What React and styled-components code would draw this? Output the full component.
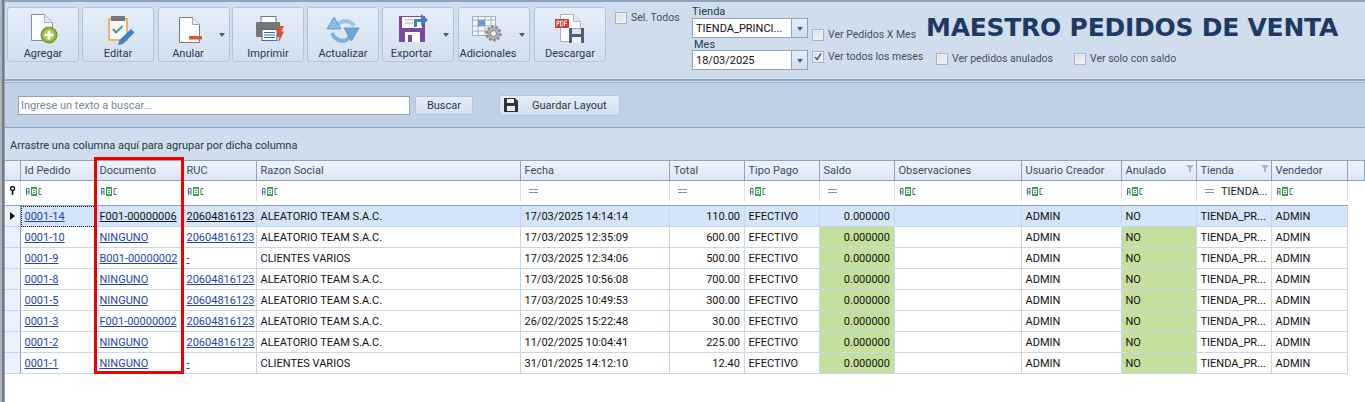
import React from 'react'
import styled, { createGlobalStyle } from 'styled-components'

const Global = createGlobalStyle`
  html, body { margin: 0; padding: 0; background: #fff; }
  body { font-family: Roboto, "Liberation Sans", Arial, sans-serif; font-size: 11px; color: #1b1b1b; overflow: hidden; }
`

const Frame = styled.div`
  width: 1365px;
  height: 402px;
  box-sizing: border-box;
  border-top: 2px solid #7d7d7d;
  border-left: 5px solid #8b97a6;
  border-image: linear-gradient(to right, #aeb4bb 2px, #757b83 2px, #757b83 4px, #8ea3c0 4px) 5;
  border-top-style: solid;
  background: #fff;
  overflow: hidden;
`

const Toolbar = styled.div`
  height: 79px;
  box-sizing: border-box;
  display: flex;
  align-items: flex-start;
  padding: 5px 0 0 2px;
  background: #d0dded;
  border-bottom: 2px solid #8ea3c0;
`

const Tool = styled.div`
  position: relative;
  width: 72px;
  height: 55px;
  flex: none;
  margin-left: ${p => p.$gap || 0}px;
  box-sizing: border-box;
  border: 1px solid #b3c3d9;
  border-radius: 3px;
  background: linear-gradient(#e5eefa, #d2dfef);
  display: flex;
  flex-direction: column;
  align-items: center;
  justify-content: space-between;
  padding: 6px 0 0;
  color: #26384f;
`

const ToolIcon = styled.svg`
  width: 32px;
  height: 32px;
  overflow: visible;
  margin-left: ${p => p.$shift || 0}px;
`

const ToolLabel = styled.span`
  line-height: 14px;
  margin-left: ${p => p.$shift || 0}px;
`

const Caret = styled.i`
  position: absolute;
  right: 4px;
  top: 25px;
  width: 0;
  height: 0;
  border: 3px solid transparent;
  border-top: 4px solid #4b5a70;
`

const SelCol = styled.div`
  margin-left: 9px;
  padding-top: 4px;
  width: 77px;
  flex: none;
`

const StoreCol = styled.div`
  width: 116px;
  flex: none;
  display: flex;
  flex-direction: column;
  color: #26384f;
`

const SmallLabel = styled.span`
  height: ${p => p.$h}px;
  line-height: ${p => p.$lh}px;
  padding-left: ${p => p.$pad || 0}px;
`

const Combo = styled.div`
  height: 20px;
  box-sizing: border-box;
  border: 1px solid #8ea3c0;
  background: #fff;
  display: flex;
  align-items: center;
  color: #111;
  padding-left: 3px;
`

const ComboText = styled.span`
  flex: 1;
`

const ComboBtn = styled.span`
  width: 16px;
  height: 18px;
  box-sizing: border-box;
  border-left: 1px solid #8ea3c0;
  background: linear-gradient(#e6eefa, #d0ddee);
  display: flex;
  align-items: center;
  justify-content: center;
  &::after {
    content: '';
    border: 3px solid transparent;
    border-top: 4px solid #4b5a70;
    margin-top: 4px;
  }
`

const CheckCol = styled.div`
  margin-left: 4px;
  width: 114px;
  flex: none;
  padding-top: 21px;
  display: flex;
  flex-direction: column;
  gap: 9px;
`

const RightCol = styled.div`
  flex: 1;
  padding-top: 5px;
`

const Title = styled.div`
  font-family: "DejaVu Sans", Verdana, sans-serif;
  font-weight: 700;
  font-size: 25px;
  letter-spacing: -0.25px;
  line-height: 32px;
  color: #1e3a63;
  white-space: nowrap;
`

const OptionRow = styled.div`
  display: flex;
  padding: 8px 0 0 10px;
  gap: 21px;
`

const CheckWrap = styled.label`
  display: flex;
  align-items: center;
  gap: 4px;
  height: 13px;
  font-size: 10.5px;
  color: #3f5068;
  white-space: nowrap;
`

const Box = styled.span`
  width: 12px;
  height: 12px;
  box-sizing: border-box;
  border: 1px solid #a9b4c2;
  background: linear-gradient(135deg, #d9dde2, #f3f4f6);
  box-shadow: inset 0 0 0 1px #eef0f3;
  display: inline-flex;
  flex: none;
`

const Check = ({ children, checked }) => (
  <CheckWrap>
    <Box>
      {checked && (
        <svg width="10" height="10" viewBox="0 0 10 10">
          <path d="M2 5l2 2.5L8 1.5" fill="none" stroke="#4d6580" strokeWidth="1.6" />
        </svg>
      )}
    </Box>
    {children}
  </CheckWrap>
)

const SearchPanel = styled.div`
  height: 47px;
  box-sizing: border-box;
  display: flex;
  align-items: center;
  padding: 2px 0 0 13px;
  background: #c1d1e5;
  border-bottom: 1px solid #8ea3c0;
  box-shadow: inset 0 1px 0 #d8e3f0, inset 0 2px 0 #9fb2cc;
`

const SearchInput = styled.div`
  width: 392px;
  height: 19px;
  box-sizing: border-box;
  border: 1px solid #8ea3c0;
  background: #fff;
  color: #7d8794;
  line-height: 17px;
  padding-left: 2px;
`

const PanelButton = styled.div`
  width: ${p => p.$w}px;
  height: 19px;
  margin-left: ${p => p.$gap}px;
  box-sizing: border-box;
  border: 1px solid #b3c3d9;
  border-radius: 3px;
  background: linear-gradient(#e5eefa, #d2dfef);
  color: #26384f;
  display: flex;
  align-items: center;
  justify-content: center;
`

const LayoutButton = styled(PanelButton)`
  height: 21px;
  justify-content: flex-start;
  padding-left: 4px;
  gap: 14px;
  white-space: nowrap;
`

const GroupPanel = styled.div`
  height: 32px;
  box-sizing: border-box;
  padding: 11px 0 0 5px;
  line-height: 14px;
  background: #d0dded;
  color: #26384f;
`

const columns = '16px 75px 87px 74px 264px 149px 75px 75px 75px 127px 100px 75px 75px 76px'

const GridWrap = styled.div`
  position: relative;
`

const HeaderRow = styled.div`
  display: grid;
  grid-template-columns: ${columns} 1fr;
  height: 21px;
  background: linear-gradient(#eef4fc, #d9e5f5);
  border-top: 1px solid #8ea3c0;
  box-sizing: border-box;
`

const HeaderCell = styled.div`
  position: relative;
  padding-left: 3.5px;
  line-height: 19px;
  color: #3a4c66;
  border-right: 1px solid #8ea3c0;
  border-bottom: 1px solid #8ea3c0;
  white-space: nowrap;
  overflow: hidden;
`

const FilterFunnel = styled.svg`
  position: absolute;
  right: 2px;
  top: 4px;
  width: 8px;
  height: 7px;
`

const FilterRow = styled.div`
  display: grid;
  grid-template-columns: ${columns};
  height: 20px;
  background: #fff;
`

const FilterCell = styled.div`
  display: flex;
  align-items: center;
  padding-left: ${p => p.$pad || 5}px;
  gap: 6px;
  overflow: hidden;
  white-space: nowrap;
  border-right: 1px solid #d3e0f2;
`

const IndicatorCell = styled.div`
  display: flex;
  align-items: center;
  justify-content: center;
  background: ${p => (p.$plain ? '#fff' : '#e9f1fb')};
  border-right: 1px solid ${p => (p.$plain ? '#d3e0f2' : '#8ea3c0')};
  border-bottom: 1px solid ${p => (p.$plain ? 'transparent' : '#c4d3e8')};
`

const Divider = styled.div`
  height: 5px;
  width: 1343px;
  box-sizing: border-box;
  background: #fff;
  border-bottom: 1px solid #8ea3c0;
`

const Row = styled.div`
  display: grid;
  grid-template-columns: ${columns};
  height: 21px;
  background: ${p => (p.$selected ? '#d4e5fb' : '#fff')};
  width: 1343px;
`

const Cell = styled.div`
  box-sizing: border-box;
  padding: 1px ${p => (p.$right ? 4 : 2)}px 0 3.5px;
  line-height: 19px;
  text-align: ${p => (p.$right ? 'right' : 'left')};
  background: ${p => (p.$green ? '#c5e09c' : 'transparent')};
  border-right: 1px solid #c6d7ee;
  border-bottom: 1px solid #c6d7ee;
  color: #111;
  white-space: nowrap;
  overflow: hidden;
  ${p => p.$dotted && 'outline: 1px dotted #111; outline-offset: -1px;'}
`

const CellLink = styled.span`
  text-decoration: underline;
  color: ${p => (p.$dark ? '#111' : '#2447a8')};
`

const Highlight = styled.div`
  position: absolute;
  left: 89px;
  top: -3px;
  width: 90px;
  height: 217px;
  box-sizing: border-box;
  border: 3px solid #f00000;
  pointer-events: none;
`

const AbcIcon = () => (
  <svg width="16" height="9" viewBox="0 0 16 9">
    <rect x="5" y="0" width="6" height="9" fill="#3fa34d" />
    <path d="M.5 8V1.5h2.5V8M.5 5h2.5" fill="none" stroke="#466a9a" />
    <path d="M6.5 2.5h3v4h-3zM6.5 4.5h3" fill="none" stroke="#fff" />
    <path d="M15.5 1.5H13v6h2.5" fill="none" stroke="#466a9a" />
  </svg>
)

const EqualsIcon = () => (
  <svg width="10" height="4" viewBox="0 0 10 4">
    <path d="M0 .5h9M0 3.5h9" stroke="#7d93bd" />
  </svg>
)

const Key = () => (
  <svg width="7" height="9" viewBox="0 0 7 9">
    <circle cx="3.5" cy="2.5" r="2" fill="none" stroke="#111" strokeWidth="1.4" />
    <path d="M3.5 4.5V9" stroke="#111" strokeWidth="1.6" />
  </svg>
)

const Pointer = () => (
  <svg width="5" height="8" viewBox="0 0 5 8">
    <path d="M0 0l5 4-5 4z" fill="#111" />
  </svg>
)

const AddIcon = () => (
  <ToolIcon viewBox="0 0 32 32">
    <path d="M4.5 .5h13l8 8v18h-21z" fill="#fbfcff" stroke="#7f8fb8" />
    <path d="M17.5 .5v8h8" fill="#e3e8f2" stroke="#a9b3c9" />
    <circle cx="22" cy="21" r="8" fill="#8fb63a" stroke="#6d9127" />
    <circle cx="22" cy="21" r="5.4" fill="#b0cf63" />
    <path d="M22 16.5v9M17.5 21h9" stroke="#fff" strokeWidth="2.6" />
  </ToolIcon>
)

const EditIcon = () => (
  <ToolIcon viewBox="0 0 32 32">
    <path d="M7 5h18v21H7z" fill="#f3f6fb" stroke="#efb55a" strokeWidth="2" />
    <rect x="9" y="2" width="14" height="5" fill="#777" />
    <path d="M11 15l3 3.5 6.5-6.5" fill="none" stroke="#5c9a8b" strokeWidth="2.2" />
    <path d="M16 31l1.5-5L29 15l3.5 3.5L21 30z" fill="#3f82c8" />
  </ToolIcon>
)

const VoidIcon = () => (
  <ToolIcon viewBox="0 0 32 32" $shift={-2}>
    <path d="M2.5 3.5h13l7 7v18h-20z" fill="#fff" stroke="#7d7d7d" />
    <path d="M15.5 3.5v7h7" fill="#eee" stroke="#aaa" />
    <rect x="12" y="22" width="13" height="3.5" fill="#d9573a" />
  </ToolIcon>
)

const PrintIcon = () => (
  <ToolIcon viewBox="0 0 32 32">
    <rect x="9" y="2.5" width="15" height="7" fill="#fff" stroke="#777" />
    <rect x="4" y="8" width="24" height="15" rx="1" fill="#777" />
    <rect x="10" y="15.5" width="15" height="11" fill="#fff" stroke="#3b6ea8" />
    <path d="M12 18.5h11M12 21h11M12 23.5h11" stroke="#3b6ea8" />
    <path d="M26 12h6l-2.5 5.5H32L26.5 29l1-8.5H25z" fill="#e3502e" />
  </ToolIcon>
)

const RefreshIcon = () => (
  <ToolIcon viewBox="0 0 32 32">
    <path d="M9 15C9 7 22 4 27 12" fill="none" stroke="#9cc6e8" strokeWidth="4" />
    <path d="M23 21C21 29 9 29 5 19" fill="none" stroke="#7fb0da" strokeWidth="4" />
    <path d="M0 15L7 3l7 12z" fill="#8dbde4" stroke="#5c8fbd" strokeWidth=".8" />
    <path d="M17 14h15l-7.5 13z" fill="#6ea5d6" stroke="#5c8fbd" strokeWidth=".8" />
  </ToolIcon>
)

const ExportIcon = () => (
  <ToolIcon viewBox="0 0 32 32" $shift={-6}>
    <path d="M0 2h26v26H0z" fill="#7a4a9d" />
    <rect x="3" y="3" width="20" height="11" fill="#fff" />
    <path d="M6 6h8M6 9h8" stroke="#b9a5cc" />
    <rect x="6" y="18" width="15" height="10" fill="#fff" />
    <rect x="9" y="21" width="4" height="7" fill="#7a4a9d" />
    <path d="M16.5 13V6.5H23" fill="none" stroke="#3f7fc4" strokeWidth="3" />
    <path d="M22 0l7 6-7 6z" fill="#3f7fc4" />
  </ToolIcon>
)

const MoreIcon = () => (
  <ToolIcon viewBox="0 0 32 32" $shift={-12}>
    <path d="M.5 2.5h23v19H.5zM6 2.5v19M13 2.5v19M19 2.5v19M.5 6h23M.5 12h23M.5 17h23" fill="#f4f7fc" stroke="#9fb0cd" />
    <rect x="6" y="6" width="7" height="6" fill="#6d9bd2" />
    <circle cx="21.5" cy="19.5" r="6.6" fill="#b9b9b9" stroke="#8a8a8a" strokeWidth="3" strokeDasharray="2.5 1.6" />
    <circle cx="21.5" cy="19.5" r="3" fill="#f2f2f2" stroke="#777" />
  </ToolIcon>
)

const PdfIcon = () => (
  <ToolIcon viewBox="0 0 32 32">
    <path d="M6.5 .5h13l7 7v20h-20z" fill="#fff" stroke="#aab4c4" />
    <path d="M19.5 .5v7h7" fill="#e3e8f2" stroke="#aab4c4" />
    <rect x="1" y="5" width="14" height="9" fill="#d93a30" />
    <path d="M3 12V7h2v2.5H3M6.5 7v5H8l1-1.5V8.5L8 7zM10.5 12V7H13M10.5 9.5H13" fill="none" stroke="#fff" strokeWidth=".9" />
    <path d="M15 14h15v15H15z" fill="#48607c" />
    <rect x="18" y="14.5" width="9" height="5.5" fill="#dbe6f3" />
    <rect x="18" y="23" width="9" height="6" fill="#eef3fa" />
  </ToolIcon>
)

const SaveIcon = () => (
  <svg width="14" height="14" viewBox="0 0 14 14">
    <path d="M0 0h11l3 3v11H0z" fill="#333" />
    <rect x="3" y="1" width="7" height="4" fill="#eee" />
    <rect x="3" y="8" width="8" height="5" fill="#eee" />
  </svg>
)

const Funnel = () => (
  <FilterFunnel viewBox="0 0 8 7">
    <path d="M0 0h8L5 3.5V7H3V3.5z" fill="#a9b6c6" />
  </FilterFunnel>
)

const tools = [
  { label: 'Agregar', icon: <AddIcon />, gap: 0 },
  { label: 'Editar', icon: <EditIcon />, gap: 3 },
  { label: 'Anular', icon: <VoidIcon />, gap: 4, caret: true, shift: -12 },
  { label: 'Imprimir', icon: <PrintIcon />, gap: 2 },
  { label: 'Actualizar', icon: <RefreshIcon />, gap: 3 },
  { label: 'Exportar', icon: <ExportIcon />, gap: 3, caret: true, shift: -13 },
  { label: 'Adicionales', icon: <MoreIcon />, gap: 4, caret: true, shift: -12 },
  { label: 'Descargar', icon: <PdfIcon />, gap: 4 },
]

const headers = ['Id Pedido', 'Documento', 'RUC', 'Razon Social', 'Fecha', 'Total', 'Tipo Pago', 'Saldo', 'Observaciones', 'Usuario Creador', 'Anulado', 'Tienda', 'Vendedor']
const filterKinds = ['abc', 'abc', 'abc', 'abc', 'eq', 'eq', 'abc', 'eq', 'abc', 'abc', 'abc', 'store', 'abc']

const orders = [
  ['0001-14', 'F001-00000006', '20604816123', 'ALEATORIO TEAM S.A.C.', '17/03/2025 14:14:14', '110.00'],
  ['0001-10', 'NINGUNO', '20604816123', 'ALEATORIO TEAM S.A.C.', '17/03/2025 12:35:09', '600.00'],
  ['0001-9', 'B001-00000002', '-', 'CLIENTES VARIOS', '17/03/2025 12:34:06', '500.00'],
  ['0001-8', 'NINGUNO', '20604816123', 'ALEATORIO TEAM S.A.C.', '17/03/2025 10:56:08', '700.00'],
  ['0001-5', 'NINGUNO', '20604816123', 'ALEATORIO TEAM S.A.C.', '17/03/2025 10:49:53', '300.00'],
  ['0001-3', 'F001-00000002', '20604816123', 'ALEATORIO TEAM S.A.C.', '26/02/2025 15:22:48', '30.00'],
  ['0001-2', 'NINGUNO', '20604816123', 'ALEATORIO TEAM S.A.C.', '11/02/2025 10:04:41', '225.00'],
  ['0001-1', 'NINGUNO', '-', 'CLIENTES VARIOS', '31/01/2025 14:12:10', '12.40'],
]

export default function App() {
  return (
    <>
      <Global />
      <Frame>
        <Toolbar>
          {tools.map(t => (
            <Tool key={t.label} $gap={t.gap}>
              {t.icon}
              <ToolLabel $shift={t.shift}>{t.label}</ToolLabel>
              {t.caret && <Caret />}
            </Tool>
          ))}
          <SelCol>
            <Check>Sel. Todos</Check>
          </SelCol>
          <StoreCol>
            <SmallLabel $h={11} $lh={9}>Tienda</SmallLabel>
            <Combo>
              <ComboText>TIENDA_PRINCI...</ComboText>
              <ComboBtn />
            </Combo>
            <SmallLabel $pad={2} $h={12} $lh={13}>Mes</SmallLabel>
            <Combo>
              <ComboText>18/03/2025</ComboText>
              <ComboBtn />
            </Combo>
          </StoreCol>
          <CheckCol>
            <Check>Ver Pedidos X Mes</Check>
            <Check checked>Ver todos los meses</Check>
          </CheckCol>
          <RightCol>
            <Title>MAESTRO PEDIDOS DE VENTA</Title>
            <OptionRow>
              <Check>Ver pedidos anulados</Check>
              <Check>Ver solo con saldo</Check>
            </OptionRow>
          </RightCol>
        </Toolbar>
        <SearchPanel>
          <SearchInput>Ingrese un texto a buscar...</SearchInput>
          <PanelButton $w={58} $gap={5}>Buscar</PanelButton>
          <LayoutButton $w={121} $gap={26}>
            <SaveIcon />
            Guardar Layout
          </LayoutButton>
        </SearchPanel>
        <GroupPanel>Arrastre una columna aquí para agrupar por dicha columna</GroupPanel>
        <GridWrap>
          <HeaderRow>
            <HeaderCell />
            {headers.map(h => (
              <HeaderCell key={h}>
                {h}
                {(h === 'Anulado' || h === 'Tienda') && <Funnel />}
              </HeaderCell>
            ))}
            <HeaderCell />
          </HeaderRow>
          <FilterRow>
            <IndicatorCell $plain><Key /></IndicatorCell>
            {filterKinds.map((k, i) => (
              <FilterCell key={i} $pad={k === 'abc' ? 5 : 8}>
                {k === 'abc' && <AbcIcon />}
                {k === 'eq' && <EqualsIcon />}
                {k === 'store' && <><EqualsIcon />TIENDA...</>}
              </FilterCell>
            ))}
          </FilterRow>
          <Divider />
          {orders.map((o, i) => {
            const selected = i === 0
            return (
              <Row key={o[0]} $selected={selected}>
                <IndicatorCell>{selected && <Pointer />}</IndicatorCell>
                <Cell $dotted={selected}><CellLink>{o[0]}</CellLink></Cell>
                <Cell><CellLink $dark={selected}>{o[1]}</CellLink></Cell>
                <Cell><CellLink $dark={selected}>{o[2]}</CellLink></Cell>
                <Cell>{o[3]}</Cell>
                <Cell>{o[4]}</Cell>
                <Cell $right>{o[5]}</Cell>
                <Cell>EFECTIVO</Cell>
                <Cell $right $green={!selected}>0.000000</Cell>
                <Cell />
                <Cell>ADMIN</Cell>
                <Cell $green={!selected}>NO</Cell>
                <Cell>TIENDA_PR...</Cell>
                <Cell>ADMIN</Cell>
              </Row>
            )
          })}
          <Highlight />
        </GridWrap>
      </Frame>
    </>
  )
}
